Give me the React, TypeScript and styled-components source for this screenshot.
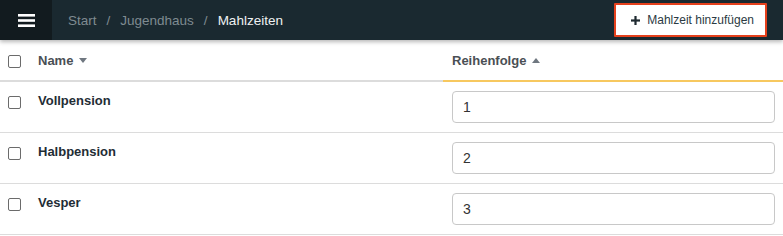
import React from "react";
import styled, { createGlobalStyle } from "styled-components";

const GlobalStyle = createGlobalStyle`
  html, body {
    margin: 0;
    padding: 0;
    background: #fff;
    font-family: "Liberation Sans", Arial, Helvetica, sans-serif;
  }
  * {
    box-sizing: border-box;
  }
`;

const Topbar = styled.header`
  display: flex;
  align-items: center;
  height: 40px;
  background-color: #1a2930;
  box-shadow: 0 2px 4px rgba(0, 0, 0, 0.28);
  position: relative;
  z-index: 2;
`;

const MenuButton = styled.button`
  display: flex;
  align-items: center;
  justify-content: center;
  width: 52px;
  height: 100%;
  border: none;
  padding: 0;
  background-color: #121b1f;
  color: #fff;
`;

const Breadcrumb = styled.nav`
  display: flex;
  align-items: center;
  padding-left: 16px;
  font-size: 13.5px;
  color: #7f8b91;
`;

const Crumb = styled.span<{ current?: boolean }>`
  color: ${(p) => (p.current ? "#eef1f2" : "#7f8b91")};
`;

const Separator = styled.span`
  margin: 0 10px;
`;

const AddButton = styled.button`
  display: flex;
  align-items: center;
  gap: 7px;
  margin-left: auto;
  margin-right: 16px;
  height: 34px;
  padding: 0 11px 0 15px;
  background: #fff;
  border: 2px solid #e5401c;
  border-radius: 1px;
  font-family: inherit;
  font-size: 12px;
  color: #2b3a42;
`;

const Table = styled.table`
  width: 100%;
  border-collapse: collapse;
  table-layout: fixed;
`;

const HeadCell = styled.th<{ sorted?: boolean; width?: number }>`
  height: 41px;
  width: ${(p) => (p.width ? `${p.width}px` : "auto")};
  padding: 0 0 0 ${(p) => (p.sorted ? 9 : 8)}px;
  text-align: left;
  vertical-align: middle;
  font-size: 13px;
  font-weight: 700;
  color: #4a4f54;
  border-bottom: 2px solid ${(p) => (p.sorted ? "#f7c85f" : "#dcdcdc")};
`;

const HeadLabel = styled.span`
  display: inline-flex;
  align-items: center;
  gap: 6px;
`;

const Row = styled.tr`
  border-bottom: 1px solid #dcdcdc;
`;

const Cell = styled.td<{ input?: boolean }>`
  height: 51px;
  vertical-align: top;
  padding: ${(p) => (p.input ? "9px 8px 0 9px" : "11px 0 0 8px")};
  font-size: 13px;
  line-height: 16px;
  font-weight: 700;
  color: #1f2d35;
`;

const Checkbox = styled.span`
  display: block;
  width: 13px;
  height: 13px;
  border: 1px solid #6b6b6b;
  border-radius: 2px;
  background: #fff;
`;

const HeadCheckbox = styled(Checkbox)`
  margin-top: 2px;
`;

const RowCheckbox = styled(Checkbox)`
  margin-top: 3px;
`;

const OrderInput = styled.input`
  display: block;
  width: 100%;
  height: 32px;
  padding: 0 10px;
  border: 1px solid #c8c8c8;
  border-radius: 4px;
  font-family: inherit;
  font-size: 14px;
  color: #333;
  background: #fff;
  outline: none;
`;

const SortArrow: React.FC<{ up?: boolean }> = ({ up }) => (
  <svg width="8" height="5" viewBox="0 0 8 5">
    <path d={up ? "M0 5 L4 0 L8 5 Z" : "M0 0 L8 0 L4 5 Z"} fill="#6f7780" />
  </svg>
);

const meals = [
  { name: "Vollpension", order: 1 },
  { name: "Halbpension", order: 2 },
  { name: "Vesper", order: 3 },
];

const App: React.FC = () => (
  <>
    <GlobalStyle />
    <Topbar>
      <MenuButton aria-label="Menü">
        <svg width="17" height="13" viewBox="0 0 17 13">
          <rect x="0" y="0" width="17" height="2.6" fill="#fff" />
          <rect x="0" y="5.2" width="17" height="2.6" fill="#fff" />
          <rect x="0" y="10.4" width="17" height="2.6" fill="#fff" />
        </svg>
      </MenuButton>
      <Breadcrumb>
        <Crumb>Start</Crumb>
        <Separator>/</Separator>
        <Crumb>Jugendhaus</Crumb>
        <Separator>/</Separator>
        <Crumb current>Mahlzeiten</Crumb>
      </Breadcrumb>
      <AddButton>
        <svg width="9" height="9" viewBox="0 0 9 9">
          <rect x="3.4" y="0" width="2.2" height="9" fill="#1f2a30" />
          <rect x="0" y="3.4" width="9" height="2.2" fill="#1f2a30" />
        </svg>
        Mahlzeit hinzufügen
      </AddButton>
    </Topbar>
    <Table>
      <thead>
        <tr>
          <HeadCell width={30}>
            <HeadCheckbox />
          </HeadCell>
          <HeadCell width={413}>
            <HeadLabel>
              Name
              <SortArrow />
            </HeadLabel>
          </HeadCell>
          <HeadCell sorted>
            <HeadLabel>
              Reihenfolge
              <SortArrow up />
            </HeadLabel>
          </HeadCell>
        </tr>
      </thead>
      <tbody>
        {meals.map((m) => (
          <Row key={m.name}>
            <Cell>
              <RowCheckbox />
            </Cell>
            <Cell>{m.name}</Cell>
            <Cell input>
              <OrderInput defaultValue={m.order} />
            </Cell>
          </Row>
        ))}
      </tbody>
    </Table>
  </>
);

export default App;
